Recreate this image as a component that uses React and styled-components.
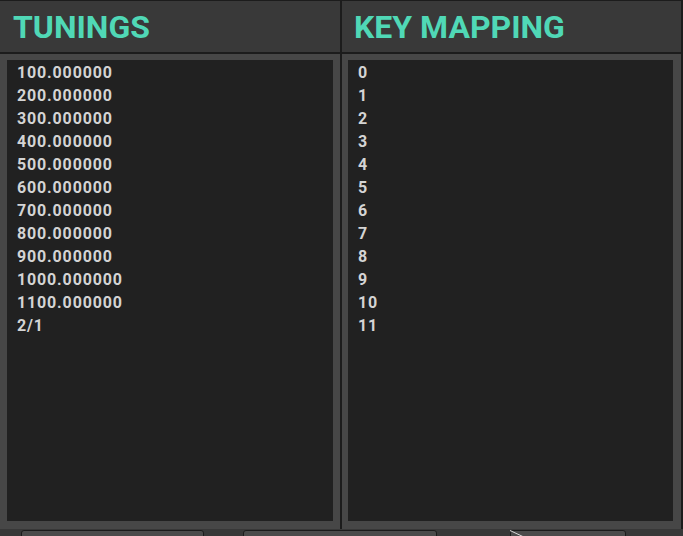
import styled, { createGlobalStyle } from "styled-components";

const GlobalStyle = createGlobalStyle`
  html, body {
    margin: 0;
    padding: 0;
    background: #353535;
    overflow: hidden;
  }
`;

const Screen = styled.div`
  width: 683px;
  height: 536px;
  display: flex;
  flex-direction: column;
  overflow: hidden;
  font-family: Roboto, "Liberation Sans", sans-serif;
`;

const Grid = styled.div`
  display: grid;
  grid-template-columns: 340px 339px;
  grid-template-rows: 51px 475px;
  column-gap: 2px;
  row-gap: 2px;
  padding: 1px 2px 0 0;
  background: #1c1c1c;
`;

const HeaderCell = styled.div`
  background: #393939;
  display: flex;
  align-items: center;
  padding-left: ${(p) => p.$indent}px;
`;

const Title = styled.h1`
  margin: 0;
  font-size: 32px;
  font-weight: 700;
  color: #50d8b6;
  line-height: 1;
  padding-top: 1px;
`;

const Panel = styled.div`
  background: #474747;
  display: flex;
  padding: 6px ${(p) => p.$right}px 8px ${(p) => p.$left}px;
`;

const List = styled.ul`
  flex: 1;
  margin: 0;
  padding: 1px 0 0 10px;
  list-style: none;
  background: #212121;
`;

const Item = styled.li`
  font-size: 16px;
  font-weight: 700;
  line-height: 23px;
  letter-spacing: 0.85px;
  color: #d4d4d4;
  white-space: nowrap;
`;

const BottomBar = styled.div`
  flex: 1;
  display: flex;
  align-items: flex-start;
  padding-top: 1px;
  background: #383838;
  overflow: hidden;
`;

const Button = styled.div`
  position: relative;
  flex: none;
  width: ${(p) => p.$w}px;
  margin-left: ${(p) => p.$ml}px;
  height: 24px;
  box-sizing: border-box;
  border: 1px solid #1b1b1b;
  border-radius: 3px;
  background: #4b4b4b;
`;

const Needle = styled.svg`
  position: absolute;
  left: -1px;
  top: -1px;
`;

const tunings = [
  "100.000000",
  "200.000000",
  "300.000000",
  "400.000000",
  "500.000000",
  "600.000000",
  "700.000000",
  "800.000000",
  "900.000000",
  "1000.000000",
  "1100.000000",
  "2/1",
];

const keys = Array.from({ length: 12 }, (_, i) => String(i));

export default function App() {
  return (
    <>
      <GlobalStyle />
      <Screen>
        <Grid>
          <HeaderCell $indent={13}>
            <Title>TUNINGS</Title>
          </HeaderCell>
          <HeaderCell $indent={12}>
            <Title>KEY MAPPING</Title>
          </HeaderCell>
          <Panel $left={7} $right={7}>
            <List>
              {tunings.map((t) => (
                <Item key={t}>{t}</Item>
              ))}
            </List>
          </Panel>
          <Panel $left={6} $right={8}>
            <List>
              {keys.map((k) => (
                <Item key={k}>{k}</Item>
              ))}
            </List>
          </Panel>
        </Grid>
        <BottomBar>
          <Button $w={183} $ml={21} />
          <Button $w={194} $ml={39} />
          <Button $w={116} $ml={73}>
            <Needle width="20" height="10" viewBox="0 0 20 10">
              <line x1="0" y1="0.5" x2="16" y2="8" stroke="#d8d8d8" strokeWidth="1" />
            </Needle>
          </Button>
        </BottomBar>
      </Screen>
    </>
  );
}
